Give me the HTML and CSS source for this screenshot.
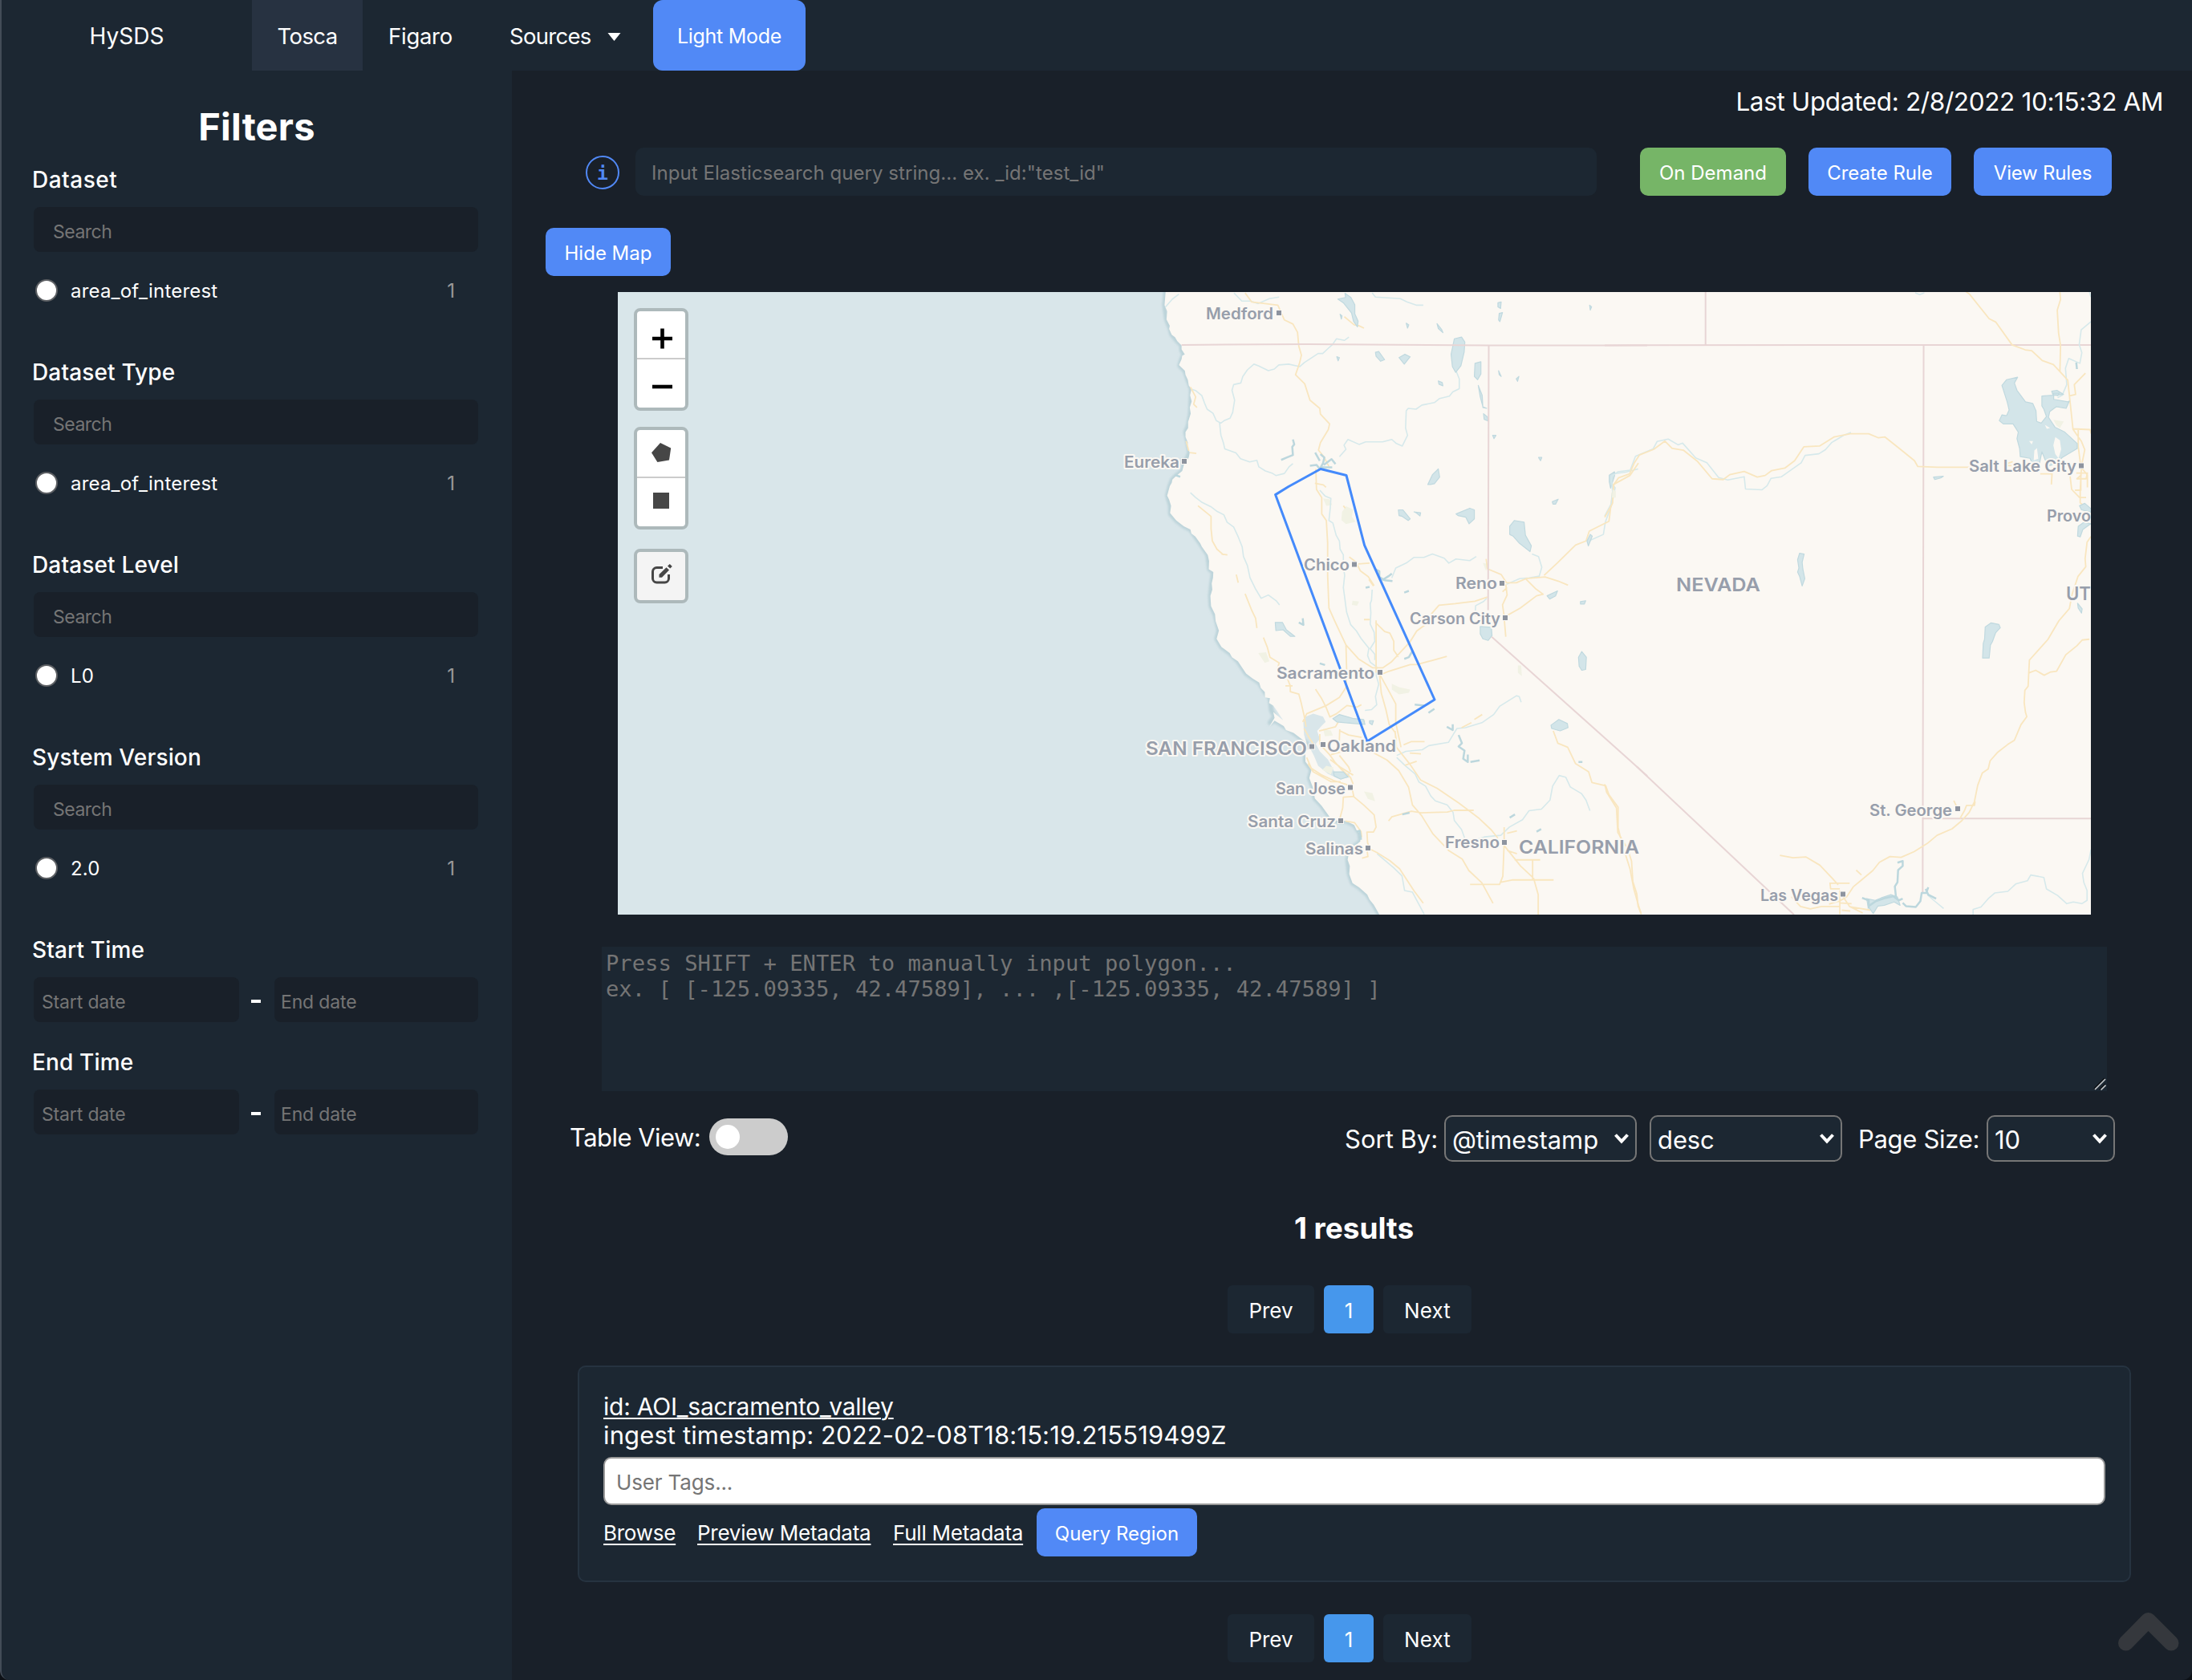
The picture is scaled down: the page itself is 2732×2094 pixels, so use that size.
FILE: index.html
```html
<!DOCTYPE html>
<html lang="en">
<head>
<meta charset="utf-8">
<title>HySDS - Tosca</title>
<link rel="stylesheet" href="styles.css">
</head>
<body>
<div class="app">
  <header class="nav">
    <a class="brand">HySDS</a>
    <a class="nav-link active">Tosca</a>
    <a class="nav-link figaro">Figaro</a>
    <a class="nav-link sources">Sources
      <svg class="caret" viewBox="0 0 16 10"><path d="M0 0h16L8 10z" fill="#fff"/></svg>
    </a>
    <button class="mode-btn">Light Mode</button>
  </header>

  <div class="body">
    <aside class="sidebar">
      <h1 class="filters-title">Filters</h1>
      <section class="facet">
        <h2 class="facet-title wide">Dataset</h2>
        <input class="facet-search" placeholder="Search">
        <label class="facet-row"><span class="radio"></span><span class="facet-name">area_of_interest</span><span class="count">1</span></label>
      </section>
      <section class="facet">
        <h2 class="facet-title">Dataset Type</h2>
        <input class="facet-search" placeholder="Search">
        <label class="facet-row"><span class="radio"></span><span class="facet-name">area_of_interest</span><span class="count">1</span></label>
      </section>
      <section class="facet">
        <h2 class="facet-title">Dataset Level</h2>
        <input class="facet-search" placeholder="Search">
        <label class="facet-row"><span class="radio"></span><span class="facet-name">L0</span><span class="count">1</span></label>
      </section>
      <section class="facet">
        <h2 class="facet-title">System Version</h2>
        <input class="facet-search" placeholder="Search">
        <label class="facet-row"><span class="radio"></span><span class="facet-name">2.0</span><span class="count">1</span></label>
      </section>
      <section class="dates">
        <h2 class="facet-title">Start Time</h2>
        <div class="date-row"><input class="date start" placeholder="Start date"><span class="dash"></span><input class="date" placeholder="End date"></div>
      </section>
      <section class="dates">
        <h2 class="facet-title">End Time</h2>
        <div class="date-row"><input class="date start" placeholder="Start date"><span class="dash"></span><input class="date" placeholder="End date"></div>
      </section>
    </aside>

    <main class="main">
      <div class="updated">Last Updated: 2/8/2022 10:15:32 AM</div>
      <div class="query-row">
        <span class="info">i</span>
        <input class="query" placeholder='Input Elasticsearch query string... ex. _id:"test_id"'>
        <button class="btn green">On Demand</button>
        <button class="btn create">Create Rule</button>
        <button class="btn view">View Rules</button>
      </div>
      <button class="btn hide-map">Hide Map</button>

      <div class="map">
        <svg class="map-canvas" viewBox="0 0 1836 776">
          <defs>
            <filter id="shore" x="-5%" y="-5%" width="110%" height="110%"><feGaussianBlur stdDeviation="3"/></filter>
          </defs>
          <rect width="1836" height="776" fill="#d9e6ea"/>
          <!-- west half: coast, Oregon and California -->
          <g transform="translate(630 -4) scale(.408163 .510204)" class="geo">
            <path class="coast-shade" filter="url(#shore)" d="M130 0L126 40 132 75 142 95 148 112 165 128 178 138 178 150 186 160 178 172 172 188 188 200 197 222 208 245 206 285 205 305 198 335 190 350 197 375 203 400 185 430 180 445 160 458 150 466 142 482 135 505 144 530 144 550 162 566 185 580 205 588 220 605 235 622 258 650 263 685 275 692 270 720 266 750 268 775 280 795 292 835 285 855 300 875 325 890 350 910 375 940 415 962 432 985 448 1000 452 1030 462 1045 448 1060 462 1055 490 1068 520 1085 545 1100 560 1110 556 1130 556 1155 575 1175 568 1195 580 1220 585 1245 605 1262 630 1290 655 1300 680 1300 705 1310 722 1330 725 1350 705 1362 690 1375 685 1395 690 1430 700 1452 720 1462 745 1480 765 1505 790 1540"/>
            <path class="land" d="M130 0L128 20 126 40 134 55 132 75 142 90 140 98 148 112 158 118 165 128 178 138 178 148 188 160 180 163 178 172 170 186 188 200 190 210 197 222 200 236 208 245 204 260 209 275 203 290 206 305 198 325 198 340 190 350 190 362 197 375 196 390 203 400 200 412 185 430 180 445 160 458 150 466 148 474 142 482 134 505 140 515 146 530 143 548 162 566 185 580 205 588 208 598 220 605 235 622 240 630 258 650 262 665 261 685 275 692 274 706 270 720 272 735 266 750 268 775 280 795 282 812 292 835 285 855 300 875 325 890 332 900 350 910 375 940 395 952 415 962 420 975 432 985 433 998 448 1000 445 1012 458 1018 470 1032 488 1054 470 1042 458 1034 462 1048 446 1070 462 1055 490 1068 497 1078 520 1085 545 1100 560 1110 552 1090 550 1060 557 1045 580 1038 610 1045 618 1058 605 1068 592 1080 600 1100 588 1112 600 1130 625 1150 645 1180 665 1186 690 1184 690 1194 655 1196 625 1185 595 1165 582 1140 570 1122 556 1130 556 1155 575 1175 568 1195 580 1220 585 1245 605 1262 630 1290 655 1300 680 1300 705 1310 712 1322 722 1330 724 1350 705 1362 690 1375 685 1395 692 1410 690 1430 700 1452 720 1462 745 1480 752 1492 765 1505 790 1540H2960V0Z"/>
            <path class="park" d="M668 545l12-14 22 8-4 18 12 12-30 6-14-10zM610 512l20 2 8 14-18 2zM412 890l24-2 10 22-14 4zM610 1075l24 4 6 12-24 2zM735 1228l26 4 8 20-22-6zM700 762l20 2-6 10-16-2zM820 965l22 8 34 6-4 8-30 4-22-12zM620 1165l22 4-8 18-26-12zM1205 920l10 0 2 26-12-8zM1098 670l14 2-4 18z"/>
            <path class="river" d="M208 245l14 4 18 12 8 18 8 15 18 10 10 18 14 6 10-6 18-6 8-14 6-30-8-24 5-14 22-4 6-16 14-16 20-14 14 4 30 12 18-4 14-10 30-2 34 6 14-10 42-22 14 0 16-12 14-10 12-14 24 4 14-8M294 327l4 30 8 20 4 14 34 10 14 14 28 8 22-4 6 16 20 10 22 6 10 5 26-5 14-16 12-8M660 410l20-18-6-10 12-14 34 12 20-6 52 0 28-6 14 10 18 6 16-26-6-18 2-42 6-6 24 2 18-10 38-6 16-10 30-6 10-10 20-8 0-24-10-20M338 10l24 20 26 0 24 6 34-12 30-4M760 10l10 10 76 4 20 8 30 8 20 0M205 498l16 12 20 12 26 10 20 12 20 8 10 18 20 12 14 24 12 24 4 24 12 22 8 30 16 26 18 24 22-8 24 14 10 10M600 492l16 14 18 6-2 24-4 30 12 6 10 30 10 14 2 20 10 14 0 30 4 20-4 30 10 60 12 30 18 16 14 18 24 24-4 18 8 16 20 12-2 20 8 22-10 30 4 20-16 12-20 2M760 735l-2 26-4 8 2 22-2 28 12 20 2 22-14 18 14 14 0 14M820 706l12-24 32-12 24-14 30 0 26-8 36 10 14 12 22-10 42 4 20-10M1074 800l2-26 24-10 10-8M1170 722l40-14 30-2 30-4 8-22-10-26-20-6M1416 618l50-18 6-30 20-44 10-40-14-14 6-20 40-4 38-8M835 1140l28-10 50-4 20-10 60-8 18-24 8-10 26-2 50-12 36-20 18-20 52-26 8 2 6 14M835 1145l26 20 30 20 12 20 20 10 16 24 14 12 36 10 18 18 4 20 22 22 10 22 20 6 40-10 50-4 26-20 40-18 20-22 38-4 26-22 8-34 20-26 20 4 14 24 34 16 14 16 12 26M775 1380l50 34 26 20 8 36 24 4 36 54M128 45l22-20 20-12"/>
            <path class="road" d="M372 10l20 22 80 8 20 36 26 10 14 20 4 34 8 22-6 20-12 28 28 22 16 40 30 20 2 14 28 24-4 14-24 32-6 18 16 16 16 24M588 440l2 50 16 20 0 40 14 16 4 54 0 80 4 80 18 32 34 58 38 34 44 22 30 0 26-14 58-50 20-26 34-20M585 475l26 4 8 6M690 655l20 12 14 22 24 14 18 22M718 672l34-2M735 808l18 0M772 810l0 70 0 58M770 815l28 22 16 4 12 20 0 22 14 16M782 938l6 50 14 40 10 36 18 20 4 20M782 940l34 50 16 24 0 46 16 60M782 944l30-10 64-16 20 0 46-10 46-10M680 870l2 60-2 44-20 24-40 20-60 20-12 20M428 852l12 24 8 24 28 14-6 16 28 16 12 24 0 14 26 6 8 24 8 28 6 28M495 970l22 0M587 978l18 22 14 22 12 24 20-8 32-20 30 4 14-6M552 1074l14 20 14 18M598 1080l50-10 10-14 80 0M600 1088l0 24 30 26 16 18 20 18 28 20 8 16M625 1128l34-8 2-44M632 1150l30 18 40 20M560 1145l14 26 30 16 38 14 40 10 10 6M564 1160l16 20 54 24 30 0M634 1138l56-12 38 6M660 1140l28 28 6 12M662 1080l26 10 40 6M700 1225l4 16 30 20 32 24 6 30-8 12-20 0 2 26 8 16 20 8 40 20 30 20 44 54 28 30M706 1240l-34 2-2 26-8 24M678 1300l28 4 20 22 2 14M745 1375l2 12-18 4M745 1125l60 26 36 26 30 40 12 44 28 26 34 44 50 42 40 20 20 28 40 30 34 50M830 1080l4 40 40 40 34 40 50 20 66 36 60 36 40 30 20 20M810 1300l10-10 60-14 30 4 80-2 20-4h60M1163 1315l0 40-4 80-10 20h-90M1163 1360l50 50 40 30 14 40 0 50M1195 1395h78M1250 1395v50M1150 1450l40-6h124M1172 1330l30-6M1172 1372l30 8M1313 1080l14 30 30 10 24 40 40 20 10 26 42 8 10 22 28 30 0 50 12 40 24 60 12 50 14 40 8 20M1108 660l4 24 42 14 16 20 30 0 30-10 58-4 40 10 30 10M1285 700l40-30 56-44 32-10 10-24 60-24 14-90 50-22 26-30M1168 722l4 26-14 24 4 22 6 56M1172 798l40-18 50-30 20-4-24-14-30-24M1158 740l14-10M940 795l24-22 50-4 60-6 38-10M345 698l6 20M372 745l20 40 12 20 4 24M228 530l40 26 0 30 4 30 14 20 20 14M300 648l18 2M205 240l16 24-6 18 10 8M203 400l20 2M192 372l8 24M672 530l6 6M675 68l30 20 14 2 16 6M1033 1072l30-12M1072 1052l24-12M856 1114l24-8 40 0M875 1134l34 2M860 1164l36-10M750 710l14 16"/>
            <path class="lake" d="M655 25l24-4-2-10 18 10 12 18 0 22 10 18-2 14-12-14-6-20-24-24zM1005 190l-4-30 10-38 22-4 10 12-2 24-10 34-16 16zM1074 182l18-4 0 30-10 14-10-8zM1084 236l12 24 2 30 12 2-12-4-8-24zM1100 305l12 8 2 10-12-4zM1180 580l14-14 30 4 4 32 18 26-4 14-32-20-20-18-10-4zM1090 825l34 2 2 20-12 12-16-4-8-12zM930 478l14-24 18-14 4 20-16 16-12 2zM1016 550l42-14 14 4 0 22-16 12-10-16-24-4zM840 540l14 0 22 22-6 4-18-10-10-2zM888 545l20 2-2 8-12-8zM842 168l18-8 16 6-18 18zM770 155l10-2 18 20-12 4-14-12zM464 815l22 0 12 18 26 16-14 0-22-16-22 2zM1390 900l10-14 14 14-2 30-12 2-8-10zM1306 1066l24-14 26 10 2 10-24 8-26-6zM640 1050l20-10 44 10 30 2 4 12-32-2-54-4zM642 1180l30 0 14 12-22 6-20-8zM752 1055l12 0-4 10-8-4zM1144 34l10-2-2 16-8-4zM1148 60l10-2-8 22-4-4zM1310 520l18-6-8 12-8 0zM1268 412l10 0-4 8zM1424 40l6 4-4 8zM962 225l12 4 2 8-12-4zM958 85l14 14 4 8-14-10zM864 84l8 4-4 8zM652 166l8 2-4 8zM662 62l6 4-2 8zM1146 200l8 14-6-4zM1200 220l8-6-4 12zM1128 358l10 0-6 8zM1396 764l16-2-4 8-12 0zM1294 750l32-12-6 12-18 8zM1416 616l10-16 6 4-12 24zM1484 455l16-8 0 10-12 30-4-16z"/>
            <path class="reservoir" d="M570 432l20-2 10 10 10-14 4-14-12-8M600 420l-14-20M612 430l24-14 12 12M604 436l34 0M518 368l4 12-6 6 2 20-18 6-18 6M768 684l14 6 0 14 16 8 24 2M790 712l20-10 10-6M740 730l12-2M858 742l14-4M858 904l14-4 10-14M890 1016l30 2M932 1036l18-10M988 1070l18 8 0-14M1024 1090l10 20-10 8 18 10-4 20 14 8 0-18M1060 1156l28-4M548 805l2 16-14-6M600 915l16 4M714 1326l8-2 4 22M852 1284l22-4M1180 1292l16-8M1262 1326l14-6M1390 1156l12 0M158 455l16 4"/>
            <path class="border" d="M178 137L560 135 1116 138H1600M1116 138L1114 785M1125 850L1600 1190"/>
          </g>
          <!-- east half: Nevada and Utah -->
          <g transform="translate(1230 -4) scale(.408163 .510204)" class="geo">
            <path class="border" d="M0 138L974 137H1485M308 8V137M974 138L971 1475M973 1294H1490M98 1167L578 1529"/>
            <path class="river" d="M0 555l20-30 4-30-4-36 20-12 38-4 16-34 54-18 12-18 34-6 30 14 14-4 40 36 34 12 36 36 28 6 50-8 4 30 50 2 16-10 12-18 32-4 60-34 12-18 42-4 20-10 20-18 38-18 20-6M948 10l14 4 14-4M1485 80l-30 20-6 36 8 20-6 26-34-12-10 24 4 40-14 26-14 6M1485 1370l-6 24-20 34 4 22 10 20 0 24-16 8-26-4-20 4-28-20-34-16-8-28-40-6-10 14-36 8-24 18-40 4-20 14-22 20-24 6 0 20 4 20M985 1480l20 14 30 20M1480 8l5 12"/>
            <path class="road" d="M0 558l24-34 4-46 14-16 34-10 14-26 16-20 44-14 34-20 22 18 34 4 44 28 44 42 34 2 20-12 44-8 40 14 24-4 20-12 40-6 30-18 28-34 48-2 44-22 50-8 56 0 30 10 20-2 50 32 40 26 10 14 60 2h108M1100 5l14 8 60 60 20 8 50 56 40 12 20 2 32 24 34 10 28 24 16 14 8 60 8 60 26 30 10 20-10 40-4 60 0 30 34 20M1390 8l2 18-10 26 4 56 6 30-2 66M1418 262l20-4-4-24 34-28M1430 342l52 2 4 10M1446 345l0 40 8 50 20 20 0 30M1440 450l34 0-4 14-28 0 14-10M1420 450l6 40 24 20 20 0M1436 492h18V452M1330 452l36 0-2 26M1485 605l-12 14-6 40 2 20-24 24-18 44-8 34-32 30-34 46-56 50-2 30-2 34-10 10-2 30 4 24 4 10-18 20-20 38-20 10-32 20-22 20-6 20-18 10-14 30-10 40-16 26-22 20-30 20-46 16-30 20-40 20-40 14-34-2-32 14-20 20-36 24-24 16-20 24-20 10-34 8M1296 938l20-6 26 12 20-8 18-2 28-40 34-22 16-14 22-2M1066 1250l8 14M1085 1294l14-20 6-12 24 0 2-10M535 1384l40 6 40-2 42 20 40 34 16 14M768 1420l16 12M686 1452h62M688 1452l2 14 28 0M718 1470v58M728 1485l20 24 40 16M570 1485l28 24 30 6 34-6 54 0M716 1500l38 2M724 1518l26 2M752 1510l60 8M1290 432h-70M1218 430l28-8M0 1210l6 20 30 38 4 60 30 40 12 30 4 50 12 30 4 30 10 20"/>
            <path class="lake" d="M1213 236l14-14 34-6-10 14 8 18 26 28 22 4 10 18 2 26 14 4 16-16-8-18-6-8 0-24 34-2-4-10 16-2 20 10-30 2 0 10 44 6 4-2-10 18-30-4-20 12-4 14 20 24 30 12 38 28 0 12-46 22-20 16-20 4-12-14-10-20-10 40-14 0-12-24-30-4-2-20-8-24 4-16-16-20-30 0-12-8 8-14 14 2 8-14-6-20zM595 646l14 2-6 20 2 16 6 24-8 18-8-24-6-10 4-10-4-20zM1162 826l18-10 24 4 4 8-14 12-10 22-6 8-4 32-20 0 2-36 4-10zM1450 530l16-6 20 14 0 8-30-6zM1446 580l18-10 20 4-24 14-8 18-8-2zM1444 768l14 14-2 10-10-12zM1004 460l30-2-8 4-18 4zM1370 255l18 0-4 6-14-2z"/>
            <path class="land" d="M1376 362l14 8 4 22-8 22-10-10-6-22zM1296 372l12 0-4 8zM1344 332l16 8-10 2zM1312 395l8-6 4 26-14 4z"/>
            <path class="lake" d="M800 1490l26 4 18-6 30-8 20 6 8 20-18-8-30 8-20 2-14 18-16-18z"/>
            <path class="reservoir" d="M786 1488l20 6 0 20M806 1508l22-12 30-8 24-4 16 10 12-4M890 1490l-4-30 8-10 2-30 14-10 0-12-16 4M910 1500l10 8 30 2 14-14 4-20 14 0 6-14M980 1466l8 14 24 10M1440 180l2 16"/>
            <path class="park" d="M1370 320l32 4-12 16-10-6zM24 490l10 4 0 16-12 0z"/>
          </g>
          <path class="aoi" d="M819.6 252.6L836 242.5 876 220.5 908 228.5 930.6 315.6 1018 508 934 560Z"/>
          <path class="marks" d="M821 23h6v6h-6zM703 208h6v6h-6zM915 336.500h6v6h-6zM1099 360h6v6h-6zM1103 403h6v6h-6zM947 471h6v6h-6zM862 563.500h6v6h-6zM876 561h6v6h-6zM910 614.500h6v6h-6zM898 656h6v6h-6zM932 690h6v6h-6zM1102 683h6v6h-6zM1821 213.500h6v6h-6zM1667 641h6v6h-6zM1524 747.500h6v6h-6z"/>
          <g class="labels">
            <text x="733" y="34" textLength="84" lengthAdjust="spacingAndGlyphs">Medford</text>
            <text x="631" y="218.500" textLength="69" lengthAdjust="spacingAndGlyphs">Eureka</text>
            <text x="855" y="347" textLength="57" lengthAdjust="spacingAndGlyphs">Chico</text>
            <text x="1044" y="370" textLength="52" lengthAdjust="spacingAndGlyphs">Reno</text>
            <text x="987" y="414" textLength="113" lengthAdjust="spacingAndGlyphs">Carson City</text>
            <text x="821" y="482" textLength="122" lengthAdjust="spacingAndGlyphs">Sacramento</text>
            <text class="big" x="658" y="576.500" textLength="201" lengthAdjust="spacingAndGlyphs">SAN FRANCISCO</text>
            <text x="884" y="572.500" textLength="86" lengthAdjust="spacingAndGlyphs">Oakland</text>
            <text x="820" y="626" textLength="87" lengthAdjust="spacingAndGlyphs">San Jose</text>
            <text x="785" y="667" textLength="110" lengthAdjust="spacingAndGlyphs">Santa Cruz</text>
            <text x="857" y="701" textLength="72" lengthAdjust="spacingAndGlyphs">Salinas</text>
            <text x="1031" y="693" textLength="68" lengthAdjust="spacingAndGlyphs">Fresno</text>
            <text class="big" x="1123" y="699.500" textLength="150" lengthAdjust="spacingAndGlyphs">CALIFORNIA</text>
            <text class="big" x="1319" y="372.500" textLength="105" lengthAdjust="spacingAndGlyphs">NEVADA</text>
            <text x="1684" y="224" textLength="134" lengthAdjust="spacingAndGlyphs">Salt Lake City</text>
            <text x="1781" y="286" textLength="55" lengthAdjust="spacingAndGlyphs">Provo</text>
            <text class="big" x="1805" y="384" textLength="31" lengthAdjust="spacingAndGlyphs">UT</text>
            <text x="1560" y="652.500" textLength="103" lengthAdjust="spacingAndGlyphs">St. George</text>
            <text x="1424" y="759" textLength="97" lengthAdjust="spacingAndGlyphs">Las Vegas</text>
          </g>
        </svg>
        <div class="controls">
          <div class="control">
            <a class="tool"><svg viewBox="0 0 60 60"><path d="M19 34h25M31.500 21.500v25" stroke="#000" stroke-width="4.600"/></svg></a>
            <a class="tool"><svg viewBox="0 0 60 60"><path d="M19 34h25" stroke="#000" stroke-width="4.600"/></svg></a>
          </div>
          <div class="control">
            <a class="tool"><svg viewBox="0 0 60 60"><path d="M29 16L42.200 22.500 40 37.500 25.400 40 18 28.200Z" fill="#464646"/></svg></a>
            <a class="tool"><svg viewBox="0 0 60 60"><path d="M20 18h20v20H20z" fill="#464646"/></svg></a>
          </div>
          <div class="control edit">
            <a class="tool"><svg viewBox="0 0 60 60"><path d="M32 19.500H24.500A5 5 0 0 0 19.500 24.500V33A5 5 0 0 0 24.500 38H34.500A5 5 0 0 0 39.500 33V28" fill="none" stroke="#464646" stroke-width="3"/><path d="M27.500 31.800V28L36.500 19.200 40 22.500 31 31.800ZM38 17.600L40.800 15 43.800 18 41.200 20.600Z" fill="#464646"/></svg></a>
          </div>
        </div>
      </div>

      <div class="polygon-box">
        <textarea class="polygon" placeholder="Press SHIFT + ENTER to manually input polygon...
ex. [ [-125.09335, 42.47589], ... ,[-125.09335, 42.47589] ]"></textarea>
        <svg class="grip" viewBox="0 0 16 16"><path d="M1 14L14 1M8 15L15 8" stroke="#0a0d10" stroke-width="1.500"/><path d="M2 15L15 2M9.500 15.500L15.500 9.500" stroke="#c3c7ca" stroke-width="1.600"/></svg>
      </div>

      <div class="options">
        <div class="table-view"><span class="tv-label">Table View:</span><span class="toggle"><span class="knob"></span></span></div>
        <div class="sorting">
          <label class="sort-label">Sort By:</label>
          <span class="select field"><span class="value">@timestamp</span><svg viewBox="0 0 20 14"><path d="M2.500 2.500L10 10.500 17.500 2.500" fill="none" stroke="#fff" stroke-width="4"/></svg></span>
          <span class="select order"><span class="value">desc</span><svg viewBox="0 0 20 14"><path d="M2.500 2.500L10 10.500 17.500 2.500" fill="none" stroke="#fff" stroke-width="4"/></svg></span>
          <label class="size-label">Page Size:</label>
          <span class="select size"><span class="value">10</span><svg viewBox="0 0 20 14"><path d="M2.500 2.500L10 10.500 17.500 2.500" fill="none" stroke="#fff" stroke-width="4"/></svg></span>
        </div>
      </div>

      <h3 class="results">1 results</h3>
      <div class="pages"><a class="page prev">Prev</a><a class="page current">1</a><a class="page next">Next</a></div>

      <article class="card">
        <a class="card-id">id: AOI_sacramento_valley</a>
        <div class="card-time">ingest timestamp: 2022-02-08T18:15:19.215519499Z</div>
        <input class="tags" placeholder="User Tags...">
        <div class="card-links">
          <a class="link browse">Browse</a>
          <a class="link preview">Preview Metadata</a>
          <a class="link full">Full Metadata</a>
          <button class="btn region">Query Region</button>
        </div>
      </article>

      <div class="pages"><a class="page prev">Prev</a><a class="page current">1</a><a class="page next">Next</a></div>
    </main>
  </div>

  <svg class="to-top" viewBox="0 0 76 48"><path d="M9.500 38L37.500 9.500 66 38" fill="none" stroke="#35383d" stroke-width="19" stroke-linecap="round" stroke-linejoin="round"/></svg>
</div>
</body>
</html>
```
FILE: styles.css
```css
* { box-sizing: border-box; }

html { background: #0d1116; }

body {
  margin: 0;
  font-family: Inter, "Liberation Sans", sans-serif;
  font-weight: 430;
  color: #fff;
}

h1, h2, h3 { margin: 0; }

input, textarea, button {
  font-family: inherit;
  font-weight: inherit;
  border: 0;
  margin: 0;
  outline: none;
}

input::placeholder, textarea::placeholder { color: #757575; opacity: 1; }

.app {
  position: relative;
  width: 2732px;
  height: 2094px;
  overflow: hidden;
  background: #192029;
  border-left: 2px solid #434c57;
  border-radius: 0 0 12px 12px;
}

/* top navigation */
.nav {
  display: flex;
  height: 88px;
  background: #1c2732;
  font-size: 27.500px;
}

.brand, .nav-link {
  display: flex;
  align-items: center;
  justify-content: center;
  padding-top: 1px;
}

.brand { width: 312px; font-size: 28px; }
.nav-link { width: 138px; letter-spacing: -.6px; }
.nav-link.active { background: #273241; }
.figaro { width: 144px; letter-spacing: -.3px; }
.sources { width: 218px; justify-content: flex-start; padding-left: 39px; gap: 20px; letter-spacing: -.7px; }
.caret { width: 17px; height: 10px; margin-top: 2px; }

.mode-btn {
  width: 190px;
  background: #5189f6;
  border-radius: 12px;
  color: #fff;
  font-size: 25px;
  letter-spacing: -.3px;
  padding: 2px 0 0;
}

.body { display: flex; height: 2006px; }

/* filters column */
.sidebar {
  width: 636px;
  padding: 40px 42px 0 40px;
  background: #1c2732;
}

.filters-title {
  font-size: 47px;
  line-height: 60px;
  letter-spacing: .2px;
  text-align: center;
  padding-left: 2px;
  margin-bottom: 16px;
}

.facet { height: 240px; }
.facet-title { font-size: 28px; font-weight: 520; line-height: 40px; letter-spacing: .15px; margin-left: -2px; }
.facet-title.wide { letter-spacing: .5px; }

.facet-search {
  display: block;
  width: 554px;
  height: 56px;
  margin-top: 14px;
  padding: 5px 24px 0;
  border-radius: 8px;
  background: #192029;
  font-size: 23px;
  letter-spacing: -.5px;
}

.facet-row {
  display: flex;
  align-items: center;
  height: 40px;
  margin-top: 28px;
  padding: 0 29px 0 2px;
  font-size: 24px;
}

.radio {
  width: 28px;
  height: 28px;
  border: 2px solid #5c5f63;
  border-radius: 50%;
  background: #fff;
}

.facet-name { margin-left: 16px; letter-spacing: .2px; }
.count { margin-left: auto; color: #999; }

.dates { height: 140px; }
.date-row { display: flex; align-items: center; margin-top: 14px; }
.date {
  width: 254px;
  height: 56px;
  padding: 5px 8px 0;
  border-radius: 8px;
  background: #192029;
  font-size: 23px;
  letter-spacing: -.15px;
}
.date.start { width: 256px; padding-left: 10px; }
.dash { width: 12px; height: 4px; margin: 4px 17px 0 15px; background: #fff; }

/* main column */
.main { width: 2094px; padding-top: 19px; }

.updated {
  height: 40px;
  line-height: 40px;
  padding-right: 36px;
  text-align: right;
  font-size: 31.500px;
  letter-spacing: -.36px;
}

.query-row {
  display: flex;
  align-items: center;
  height: 60px;
  margin-top: 37px;
  padding-left: 92px;
}

.info {
  width: 42px;
  height: 42px;
  margin-top: 2px;
  border: 2.500px solid #5189f6;
  border-radius: 50%;
  color: #5189f6;
  font: bold 23px/41px "DejaVu Sans Mono", monospace;
  text-align: center;
}

.query {
  width: 1198px;
  height: 60px;
  margin: 0 54px 0 20px;
  padding: 2px 20px 0;
  border-radius: 10px;
  background: #1c2732;
  font-size: 24px;
  letter-spacing: .05px;
}

.btn {
  height: 60px;
  padding: 2px 0 0;
  border-radius: 10px;
  background: #5189f6;
  color: #fff;
  font-size: 24px;
  white-space: nowrap;
}

.green { width: 182px; background: #76b567; margin-right: 28px; }
.create { width: 178px; margin-right: 28px; }
.view { width: 172px; letter-spacing: -.2px; }
.hide-map { display: block; width: 156px; margin: 40px 0 0 42px; }

/* map */
.map {
  position: relative;
  width: 1836px;
  height: 776px;
  margin: 20px 0 0 132px;
  overflow: hidden;
  background: #d9e6ea;
}

.map-canvas { display: block; width: 1836px; height: 776px; }
.geo path { vector-effect: non-scaling-stroke; stroke-linejoin: round; }
.land { fill: #fbf8f3; }
.coast-shade { fill: none; stroke: #bdd4da; stroke-width: 6; }
.park { fill: #f1f2e4; }
.river { fill: none; stroke: #d6e9eb; stroke-width: 1.600; }
.road { fill: none; stroke: #f9e6bf; stroke-width: 1.800; }
.lake { fill: #d3e5e9; stroke: #c0d9df; stroke-width: 1.200; }
.reservoir { fill: none; stroke: #bcd7dd; stroke-width: 2.500; }
.border { fill: none; stroke: #e8d5d5; stroke-width: 2; }
.aoi { fill: none; stroke: #448afb; stroke-width: 3; stroke-linejoin: round; }
.marks { fill: #8e949f; stroke: #fbf8f3; stroke-width: 2; paint-order: stroke; }

.labels {
  font-size: 19.500px;
  font-weight: 600;
  fill: #979eab;
  stroke: #fbf8f3;
  stroke-width: 4;
  stroke-linejoin: round;
  paint-order: stroke;
}
.labels .big { font-size: 23.500px; }

.controls {
  position: absolute;
  top: 20px;
  left: 20px;
  display: flex;
  flex-direction: column;
  gap: 20px;
}

.control {
  width: 68px;
  height: 128px;
  border: 4px solid #adb9bb;
  border-radius: 8px;
  background: #fff;
}

.tool { display: block; height: 60px; }
.tool:first-child:not(:last-child) { border-bottom: 2px solid #ccc; }
.tool svg { display: block; width: 60px; height: 60px; }
.control.edit { height: 68px; margin-top: 4px; background: #f4f4f4; }

.polygon-box {
  position: relative;
  width: 1876px;
  height: 180px;
  margin: 40px 0 0 112px;
}

.polygon {
  display: block;
  width: 100%;
  height: 100%;
  padding: 5px 5px;
  background: #1c2732;
  font: 27.200px/32px "DejaVu Sans Mono", monospace;
  resize: none;
}

.grip { position: absolute; right: 1px; bottom: 1px; width: 16px; height: 16px; }

/* table and sort options */
.options {
  display: flex;
  justify-content: space-between;
  height: 58px;
  margin: 30px 96px 0 72px;
  font-size: 31px;
}

.table-view { display: flex; align-items: center; height: 54px; }
.tv-label { width: 174px; letter-spacing: -.55px; }
.toggle { width: 98px; height: 46px; padding: 8px; border-radius: 23px; background: #ccc; }
.knob { display: block; width: 30px; height: 30px; border-radius: 50%; background: #fff; }

.sorting { display: flex; align-items: center; height: 58px; }
.sort-label { width: 124px; letter-spacing: 0; }
.size-label { width: 160px; letter-spacing: -.3px; margin-left: 20px; }

.select {
  display: flex;
  align-items: center;
  justify-content: space-between;
  height: 58px;
  padding: 3px 7px 0 8px;
  border: 2px solid #767676;
  border-radius: 10px;
  background: #1c2732;
}
.value { letter-spacing: -.1px; }
.select svg { width: 20px; height: 14px; margin-top: -4px; }
.field { width: 240px; margin-right: 16px; }
.order { width: 240px; }
.size { width: 160px; }

.results {
  height: 44px;
  margin-top: 61px;
  line-height: 44px;
  text-align: center;
  font-size: 37px;
  padding-left: 5px;
}

.pages { display: flex; gap: 12px; height: 60px; margin: 49px 0 0 892px; font-size: 26px; }
.page {
  display: flex;
  align-items: center;
  justify-content: center;
  border-radius: 6px;
  background: #1c2732;
  padding-top: 2px;
}
.prev { width: 108px; }
.next { width: 110px; letter-spacing: .2px; }
.current { width: 62px; background: #4697ec; }

/* result card */
.card {
  width: 1936px;
  height: 270px;
  margin: 40px 0 0 82px;
  padding: 31px 30px 0;
  border: 2px solid #263340;
  border-radius: 10px;
  background: #1c2732;
}

.card + .pages { margin-top: 40px; }

.card-id {
  display: block;
  height: 36px;
  line-height: 36px;
  font-size: 30px;
  letter-spacing: -.22px;
  text-decoration: underline;
  text-decoration-thickness: 2px;
  text-underline-offset: 3px;
}
.card-time { height: 36px; line-height: 36px; font-size: 31px; letter-spacing: .12px; }

.tags {
  display: block;
  width: 1872px;
  height: 60px;
  margin-top: 9px;
  padding: 2px 14px 0;
  border: 2px solid #999;
  border-radius: 10px;
  background: #fff;
  font-size: 26px;
  letter-spacing: -.15px;
}

.card-links { display: flex; align-items: center; height: 60px; margin-top: 4px; font-size: 26px; letter-spacing: -.25px; }
.link { text-decoration: underline; text-decoration-thickness: 2px; text-underline-offset: 4px; white-space: nowrap; }
.browse { width: 117px; }
.preview { width: 244px; }
.full { width: 179px; }
.region { width: 200px; }

.to-top { position: absolute; left: 2638px; top: 2010px; width: 76px; height: 48px; }
```
